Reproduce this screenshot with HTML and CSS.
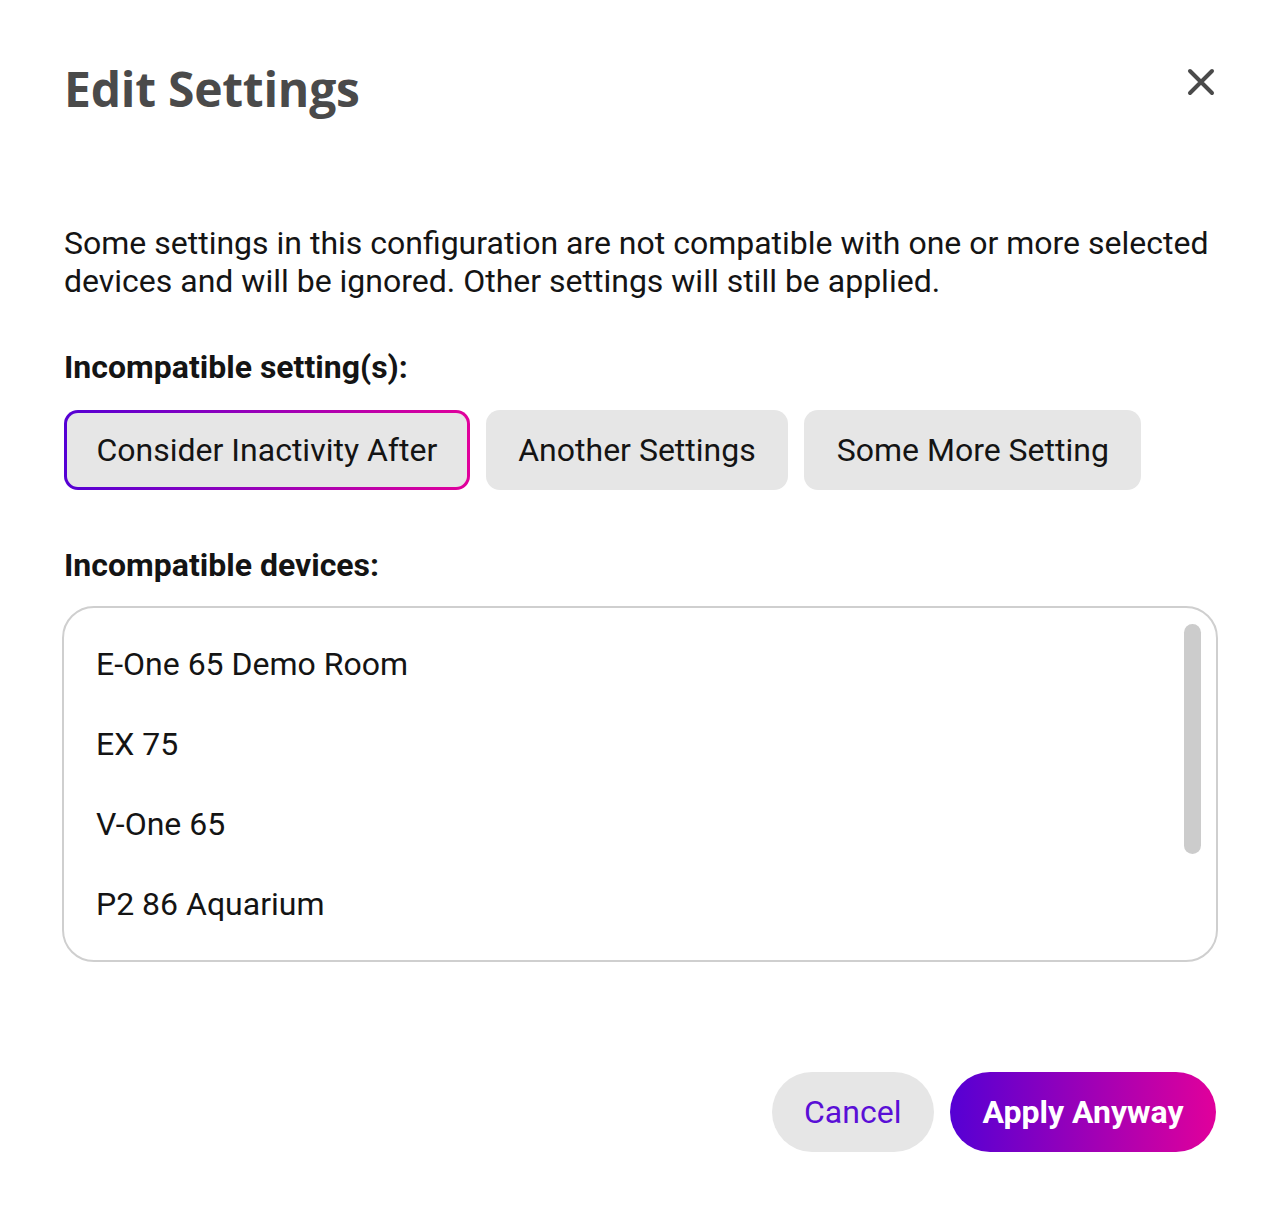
FILE: index.html
```html
<!DOCTYPE html>
<html lang="en">
<head>
<meta charset="utf-8">
<title>Edit Settings</title>
<link rel="stylesheet" href="styles.css">
</head>
<body>
<div class="dialog">
  <header class="dialog-header">
    <h1 class="dialog-title">Edit Settings</h1>
    <button class="close-btn" aria-label="Close">
      <svg width="28" height="28" viewBox="0 0 28 28"><path d="M3 3L25 25M25 3L3 25" stroke="#4a4a4a" stroke-width="4" stroke-linecap="round"/></svg>
    </button>
  </header>
  <p class="intro">Some settings in this configuration are not compatible with one or more selected devices and will be ignored. Other settings will still be applied.</p>
  <h2 class="section-title first">Incompatible setting(s):</h2>
  <div class="chips">
    <button class="chip active">Consider Inactivity After</button>
    <button class="chip">Another Settings</button>
    <button class="chip">Some More Setting</button>
  </div>
  <h2 class="section-title second">Incompatible devices:</h2>
  <div class="device-box">
    <ul class="device-list">
      <li>E-One 65 Demo Room</li>
      <li>EX 75</li>
      <li>V-One 65</li>
      <li>P2 86 Aquarium</li>
    </ul>
    <div class="scroll-thumb"></div>
  </div>
  <footer class="actions">
    <button class="btn btn-cancel">Cancel</button>
    <button class="btn btn-apply">Apply Anyway</button>
  </footer>
</div>
</body>
</html>
```
FILE: styles.css
```css
html, body {
  margin: 0;
  padding: 0;
  background: #ffffff;
}
body {
  font-family: Roboto, "Liberation Sans", sans-serif;
  color: #141414;
}
.dialog {
  width: 1280px;
  box-sizing: border-box;
  padding: 56px 64px 64px;
  display: flex;
  flex-direction: column;
}
.dialog-header {
  display: flex;
  justify-content: space-between;
  align-items: flex-start;
}
.dialog-title {
  margin: 0;
  font-family: "Open Sans", sans-serif;
  font-weight: 700;
  font-size: 48px;
  line-height: 66px;
  color: #4a4a4a;
  letter-spacing: -0.25px;
}
.close-btn {
  margin-top: 12px;
  margin-right: 1px;
  width: 28px;
  height: 28px;
  padding: 0;
  border: 0;
  background: none;
  display: flex;
}
.intro {
  margin: 102px 0 0;
  font-size: 32px;
  line-height: 38px;
}
.section-title {
  margin: 0;
  font-size: 32px;
  line-height: 38px;
  font-weight: 700;
}
.section-title.first { margin-top: 48px; }
.section-title.second { margin-top: 56px; }
.chips {
  margin-top: 24px;
  display: flex;
  gap: 16px;
}
.chip {
  height: 80px;
  box-sizing: border-box;
  padding: 0 29.5px;
  border: 3px solid transparent;
  border-radius: 14px;
  background: #e6e6e6;
  font-family: Roboto, "Liberation Sans", sans-serif;
  font-size: 32px;
  color: #141414;
}
.chip.active {
  background:
    linear-gradient(#e6e6e6, #e6e6e6) padding-box,
    linear-gradient(90deg, #5500d4, #e1009b) border-box;
}
.device-box {
  position: relative;
  margin: 22px -2px 0;
  border: 2px solid #cfcfcf;
  border-radius: 32px;
  padding: 16px 32px;
}
.device-list {
  list-style: none;
  margin: 0;
  padding: 0;
}
.device-list li {
  height: 80px;
  display: flex;
  align-items: center;
  font-size: 32px;
}
.scroll-thumb {
  position: absolute;
  top: 16px;
  right: 15px;
  width: 17px;
  height: 230px;
  border-radius: 9px;
  background: #cccccc;
}
.actions {
  margin-top: 110px;
  display: flex;
  justify-content: flex-end;
  gap: 16px;
}
.btn {
  height: 80px;
  padding: 0 32.5px;
  border: 0;
  border-radius: 40px;
  font-family: Roboto, "Liberation Sans", sans-serif;
  font-size: 32px;
}
.btn-cancel {
  background: #e6e6e6;
  color: #5a0fd6;
}
.btn-apply {
  background: linear-gradient(90deg, #5500d4, #e1009b);
  color: #ffffff;
  font-weight: 700;
}
```
